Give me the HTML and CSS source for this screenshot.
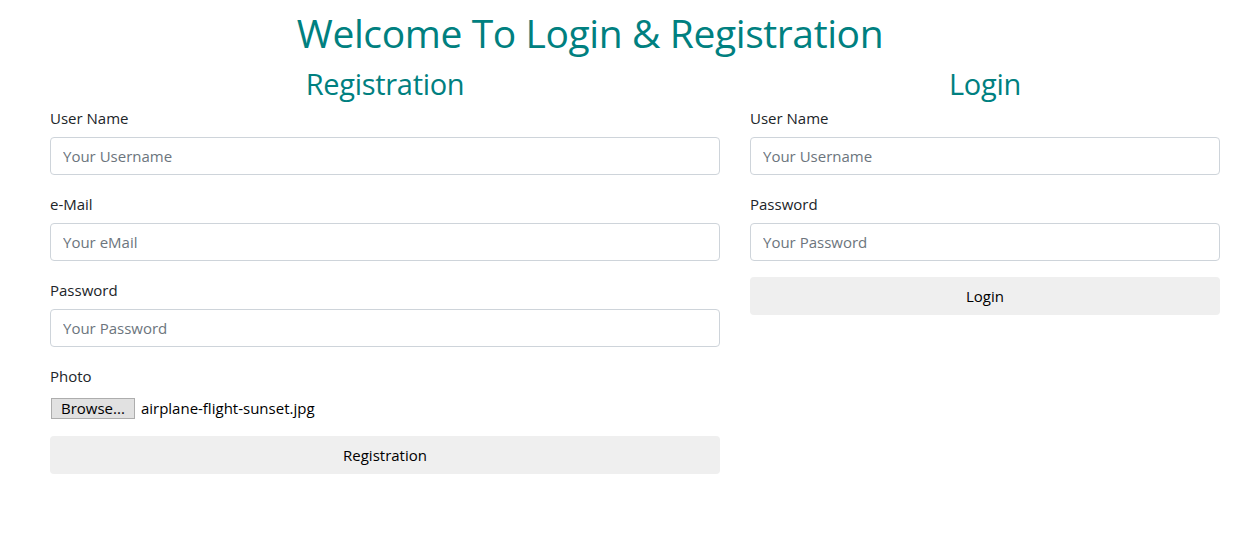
FILE: index.html
```html
<!DOCTYPE html>
<html lang="en">
<head>
<meta charset="utf-8">
<title>Login &amp; Registration</title>
<link rel="stylesheet" href="styles.css">
</head>
<body>
<h1 class="title">Welcome To Login &amp; Registration</h1>
<div class="row">
  <section class="col col-reg">
    <h2 class="heading">Registration</h2>
    <div class="field">
      <label class="label">User Name</label>
      <input class="input" type="text" placeholder="Your Username">
    </div>
    <div class="field">
      <label class="label">e-Mail</label>
      <input class="input" type="text" placeholder="Your eMail">
    </div>
    <div class="field">
      <label class="label">Password</label>
      <input class="input" type="password" placeholder="Your Password">
    </div>
    <div class="field">
      <label class="label">Photo</label>
      <div class="file">
        <span class="browse">Browse...</span>
        <span class="filename">airplane-flight-sunset.jpg</span>
      </div>
    </div>
    <button class="btn" type="button">Registration</button>
  </section>
  <section class="col col-login">
    <h2 class="heading">Login</h2>
    <div class="field">
      <label class="label">User Name</label>
      <input class="input" type="text" placeholder="Your Username">
    </div>
    <div class="field">
      <label class="label">Password</label>
      <input class="input" type="password" placeholder="Your Password">
    </div>
    <button class="btn" type="button">Login</button>
  </section>
</div>
</body>
</html>
```
FILE: styles.css
```css
* { box-sizing: border-box; }
body {
  margin: 0;
  font-family: "Open Sans", "Noto Sans", sans-serif;
  color: #212529;
  background: #fff;
}
.title {
  width: 1180px;
  margin: 9px 0 0;
  text-align: center;
  font-size: 39px;
  letter-spacing: -0.4px;
  line-height: 48px;
  font-weight: 400;
  color: #008080;
}
.row {
  display: flex;
  gap: 30px;
  padding-left: 50px;
}
.col-reg { width: 670px; }
.col-login { width: 470px; }
.heading {
  margin: 7px 0 0;
  padding-bottom: 3px;
  text-align: center;
  font-size: 29px;
  letter-spacing: -0.3px;
  line-height: 40px;
  font-weight: 400;
  color: #008080;
}
.field {
  display: flex;
  flex-direction: column;
  gap: 8px;
  margin-bottom: 18px;
}
.label {
  font-size: 15px;
  line-height: 22px;
}
.input {
  height: 38px;
  padding: 6px 12px;
  border: 1px solid #ced4da;
  border-radius: 4px;
  font-family: inherit;
  font-size: 15px;
  color: #212529;
}
.input::placeholder { color: #6c757d; }
.file {
  display: flex;
  align-items: center;
  gap: 6px;
  height: 22px;
  margin-top: 2px;
  margin-bottom: 1px;
}
.browse {
  height: 21px;
  padding: 0 9px;
  margin-left: 1px;
  border: 1px solid #adadad;
  background: #e1e1e1;
  font-size: 15px;
  line-height: 19px;
  color: #000;
}
.filename {
  font-size: 15px;
  color: #000;
}
.btn {
  display: block;
  width: 100%;
  height: 38px;
  margin-top: -2px;
  border: none;
  border-radius: 4px;
  background: #efefef;
  font-family: inherit;
  font-size: 15px;
  color: #000;
}
```
